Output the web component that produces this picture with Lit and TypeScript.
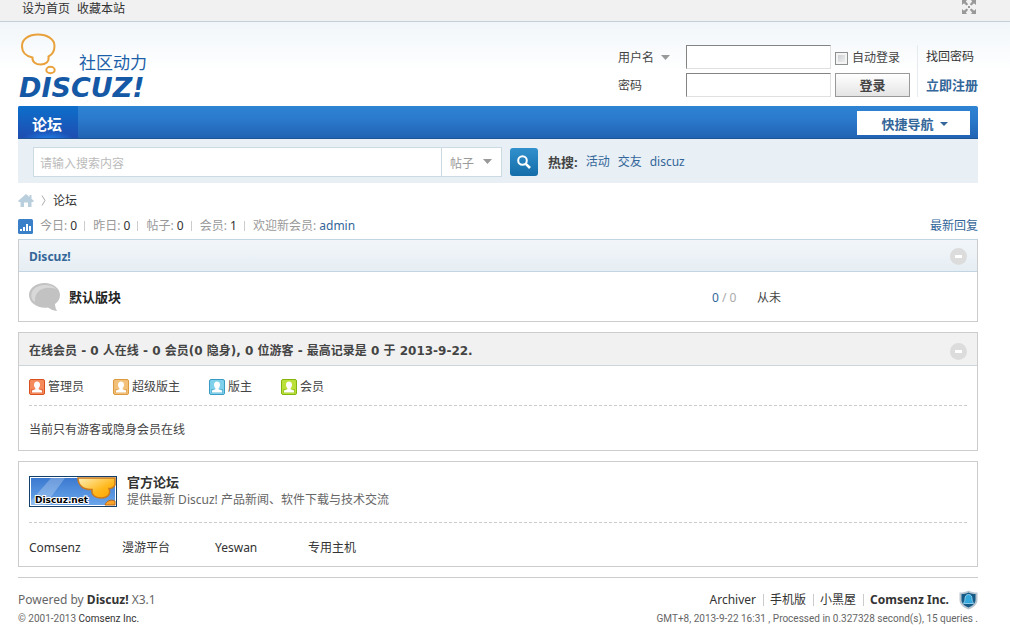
import { LitElement, html, css, svg } from "lit";
import { customElement, state } from "lit/decorators.js";

const ROLES = [
  { name: "管理员", light: "#f58a5c", dark: "#d9501f" },
  { name: "超级版主", light: "#f3c07a", dark: "#dc9a40" },
  { name: "版主", light: "#7fd0ea", dark: "#3a9cc4" },
  { name: "会员", light: "#bce03a", dark: "#84b40e" },
];

const STATS = [
  { label: "今日", value: 0 },
  { label: "昨日", value: 0 },
  { label: "帖子", value: 0 },
  { label: "会员", value: 1 },
];

@customElement("app-root")
export class AppRoot extends LitElement {
  static styles = css`
    :host {
      display: block;
      min-height: 100vh;
      background: #fff;
      color: #444;
      font: 12px/18px "Noto Sans", "Noto Sans CJK SC", sans-serif;
    }
    * { box-sizing: border-box; }
    a { color: #333; text-decoration: none; }
    a:hover { text-decoration: underline; }
    button, input, select { font: inherit; color: inherit; margin: 0; padding: 0; }
    svg { display: block; flex: none; }
    .link { color: #369; }
    .strong { font-weight: 700; }
    .wrap { padding: 0 32px 0 18px; }
    .top {
      display: flex;
      justify-content: space-between;
      height: 22px;
      background: #f1f1f1;
      border-bottom: 1px solid #c4ced6;
    }
    .toplinks { display: flex; gap: 7px; padding-left: 4px; line-height: 18px; }
    .icon-button { display: block; border: 0; background: none; cursor: pointer; }
    .top .icon-button { align-self: flex-start; }

    .header {
      display: flex;
      justify-content: space-between;
      height: 84px;
      background: linear-gradient(#f1f6fa, #fff 50px);
    }
    .logo { margin-top: 9px; }
    .login {
      display: flex;
      margin-top: 23px;
      height: 52px;
    }
    .fields {
      display: grid;
      grid-template-columns: 64px 145px 75px;
      grid-template-rows: 24px 24px;
      gap: 4px;
      align-items: center;
    }
    .fields label { padding-top: 2px; }
    .pick { display: flex; align-items: center; }
    .pick select {
      appearance: none;
      border: 0;
      background: none;
      width: 43px;
      height: 24px;
      padding-top: 2px;
    }
    .box {
      width: 100%;
      height: 24px;
      background: #fff;
      border: 1px solid;
      border-color: #848484 #e0e0e0 #e0e0e0 #848484;
      padding: 0 4px;
    }
    .auto { display: flex; align-items: center; gap: 4px; white-space: nowrap; }
    .auto input {
      appearance: none;
      width: 13px;
      height: 13px;
      border: 1px solid #8e8f8f;
      background: linear-gradient(135deg, #c4c8cc, #f6f6f6);
      box-shadow: inset 0 0 0 2px #f4f4f4;
    }
    .auto input:checked { background: #369; }
    .submit {
      height: 24px;
      border: 1px solid #999;
      background: linear-gradient(#fff, #e4e4e4);
      font-size: 13px;
      font-weight: 700;
      cursor: pointer;
    }
    .extra {
      display: grid;
      grid-template-rows: 24px 24px;
      gap: 4px;
      align-items: center;
      margin-left: 7px;
      padding-left: 8px;
      border-left: 1px solid #e6ebef;
    }
    .extra .strong { font-size: 13px; }

    .nav {
      display: flex;
      justify-content: space-between;
      align-items: flex-start;
      height: 33px;
      border-radius: 2px 2px 0 0;
      border-bottom: 1px solid #1f5496;
      background: linear-gradient(#2f83d3, #2b7acd 40%, #2263b3);
      overflow: hidden;
    }
    .tab {
      width: 60px;
      height: 33px;
      padding-left: 14px;
      background:
        radial-gradient(ellipse 26px 8px at 50% 100%, #1f80e8, transparent),
        linear-gradient(#0d6fcb, #1f4cb0);
      color: #fff;
      font-size: 15px;
      font-weight: 700;
      line-height: 36px;
    }
    .quick {
      display: flex;
      justify-content: center;
      align-items: center;
      gap: 6px;
      width: 113px;
      height: 24px;
      margin: 5px 8px 0 0;
      padding: 2px 0 0 2px;
      border: 0;
      background: #fff;
      color: #369;
      font-size: 13px;
      font-weight: 700;
      cursor: pointer;
    }
    .search {
      display: flex;
      align-items: center;
      height: 44px;
      padding: 1px 15px 0;
      background: #e8eff5;
    }
    .query {
      flex: 0 1 409px;
      height: 30px;
      padding: 4px 6px 0;
      border: 1px solid #ccdae3;
      background: #fff;
    }
    .query::placeholder { color: #bbb; opacity: 1; }
    .kind {
      display: flex;
      align-items: center;
      height: 30px;
      width: 60px;
      padding-left: 8px;
      border: 1px solid #ccdae3;
      border-left: 0;
      background: #fff;
      color: #999;
    }
    .kind select { appearance: none; border: 0; background: none; width: 33px; height: 28px; padding-top: 4px; }
    .go {
      display: grid;
      place-items: center;
      width: 28px;
      height: 28px;
      margin: 0 10px 0 8px;
      border: 0;
      border-radius: 3px;
      background: linear-gradient(#3191cd, #146ca8);
      cursor: pointer;
    }
    .hot { display: flex; gap: 8px; }
    .hot .strong { font-size: 13px; }

    .crumbs { display: flex; align-items: center; gap: 7px; height: 35px; }
    .statbar { display: flex; justify-content: space-between; height: 16px; margin-bottom: 5px; line-height: 16px; color: #999; }
    .statrow { display: flex; align-items: center; }
    .statrow svg { margin-right: 7px; }
    .stat { padding-right: 8px; margin-right: 8px; background: linear-gradient(#ccc, #ccc) right center / 1px 10px no-repeat; }
    .stat b { font-weight: 400; color: #333; }

    .panel { border: 1px solid #ccc; margin-bottom: 10px; }
    .head {
      display: flex;
      align-items: center;
      justify-content: space-between;
      height: 33px;
      padding: 2px 10px 0;
      border-bottom: 1px solid #c2d5e3;
    }
    .head h2 { margin: 0; font-size: 12px; line-height: 18px; font-weight: 700; }
    .forum { border-color: #c2d5e3 #ccc #ccc; }
    .forum .head { height: 32px; background: linear-gradient(#f2f6fa, #e6eef3); }
    .online .head { padding-top: 4px; background: #f1f1f1; border-color: #ccd5da; }
    .online h2 { font-family: "DejaVu Sans", "Noto Sans CJK SC", sans-serif; }
    table { width: 100%; border-collapse: collapse; table-layout: fixed; }
    td { padding: 2px 0 0; height: 49px; text-align: left; }
    .c-icon { width: 50px; padding: 0 0 0 10px; }
    .c-count { width: 45px; color: #aaa; }
    .c-last { width: 220px; }
    td .strong { font-size: 13px; color: #222; }
    .roles {
      display: flex;
      gap: 29px;
      margin: 0 10px;
      height: 40px;
      padding-top: 2px;
      align-items: center;
      border-bottom: 1px dashed #ccc;
    }
    .role { display: flex; align-items: center; gap: 3px; }
    .note { margin: 0; padding: 15px 10px 11px; }
    .partner {
      display: flex;
      gap: 10px;
      margin: 0 10px;
      padding: 11px 0 13px;
      border-bottom: 1px dashed #ccc;
      color: #666;
    }
    .partner svg { margin-top: 3px; }
    .partner .strong { display: block; font-size: 13px; color: #333; }
    .friends { display: grid; grid-template-columns: repeat(4, 93px); padding: 16px 10px 9px; }

    .footer {
      display: flex;
      justify-content: space-between;
      border-top: 1px solid #ccc;
      padding-top: 12px;
      color: #666;
    }
    .footer p { margin: 0; }
    .powered { line-height: 20px; }
    .small { font: 10px/18px Roboto, sans-serif; }
    .right { text-align: right; }
    .bottomlinks { display: flex; align-items: center; justify-content: flex-end; height: 20px; }
    .bottomlinks a + a { margin-left: 7px; padding-left: 7px; background: linear-gradient(#ccc, #ccc) left center / 1px 12px no-repeat; }
    .bottomlinks svg { margin-left: 10px; }
  `;

  @state() private forumOpen = true;
  @state() private onlineOpen = true;

  private arrow(color: string) {
    return html`<svg width="9" height="5" viewBox="0 0 9 5" aria-hidden="true"><path d="M0 0h9L4.500 5z" fill=${color} /></svg>`;
  }

  private toggle(open: boolean, flip: () => void) {
    return html`<button class="icon-button" aria-label="收起/展开" aria-expanded=${open} @click=${flip}>
      <svg width="17" height="17" viewBox="0 0 17 17">
        <circle cx="8.500" cy="8.500" r="8.500" fill="#dcdcdc" />
        <path d=${open ? "M5 7h7v3H5z" : "M5 7h2V5h3v2h2v3h-2v2H7v-2H5z"} fill="#fff" />
      </svg>
    </button>`;
  }

  private logo() {
    return html`<svg class="logo" width="140" height="75" viewBox="0 0 140 75" role="img" aria-label="Discuz! 社区动力">
      <g fill="none" stroke="#e9a23b" stroke-width="2">
        <path d="M14.500 26.500C8 25.500 4 21 4 15C4 8 11 3.500 20 3.500S36.500 8 36.500 15C36.500 20.500 33.500 24 30.500 25.500C31.500 31 27.500 33.500 22.500 33.500C18 33.500 14 31 14.500 26.500Z" />
        <ellipse cx="32.500" cy="39" rx="4.200" ry="3.200" />
      </g>
      <text x="61" y="38" font-family="Noto Sans CJK SC, sans-serif" font-size="17" fill="#1c5fa8">社区动力</text>
      <text x="1" y="66" font-family="DejaVu Sans, sans-serif" font-size="27" font-weight="700" font-style="italic" fill="#1559a6">DISCUZ!</text>
    </svg>`;
  }

  private person(light: string, dark: string) {
    return html`<svg width="16" height="16" viewBox="0 0 16 16" aria-hidden="true">
      <rect x=".5" y=".5" width="15" height="15" rx="1.500" fill=${light} stroke=${dark} />
      <path d="M2 10h12v4H2z" fill=${dark} opacity=".5" />
      <path d="M8 2.500C10 2.500 11 4 11 5.800C11 7.500 10.300 8.500 9.600 9.200V10.300L13 11.600V13.500H3V11.600L6.400 10.300V9.200C5.700 8.500 5 7.500 5 5.800C5 4 6 2.500 8 2.500Z" fill="#fff" />
    </svg>`;
  }

  private banner() {
    return html`<svg width="88" height="31" viewBox="0 0 88 31" role="img" aria-label="Discuz.net">
      <defs>
        <linearGradient id="sky" x2="0" y2="1"><stop stop-color="#3b79d0" /><stop offset="1" stop-color="#6aa6ea" /></linearGradient>
        <linearGradient id="sun" x2="1" y2="1"><stop stop-color="#fff0b8" /><stop offset=".6" stop-color="#ffb81c" /><stop offset="1" stop-color="#ffa200" /></linearGradient>
      </defs>
      <rect width="88" height="31" fill="#12406b" />
      <rect x="1" y="1" width="86" height="29" fill="#fff" />
      <rect x="2" y="2" width="84" height="27" fill="url(#sky)" />
      <path d="M22 2h14L16 29H2v-4z" fill="#fff" opacity=".25" />
      <path d="M49 2C49 9 54 14 63 13.500C62 19 66 22 72 22C79 22 82 18 80 12.500C83 12.500 85 11 86 9V2Z" fill="url(#sun)" stroke="#c97a20" stroke-width="1.500" />
      <path d="M76 29C77 25 82 23 86 25V29Z" fill="#f7a32a" stroke="#b8691a" />
      <text x="6" y="27" font-family="DejaVu Sans, sans-serif" font-size="9" font-weight="700" fill="#000" stroke="#fff" stroke-width="2" paint-order="stroke">Discuz.net</text>
    </svg>`;
  }

  render() {
    return html`
      <div class="top wrap">
        <div class="toplinks"><a href="#">设为首页</a><a href="#">收藏本站</a></div>
        <button class="icon-button" aria-label="切换到窄版">
          <svg width="17" height="15" viewBox="0 0 17 15">
            <path d="M1 0h5L4.800 1.500 7.200 4.200 5.500 5.500 3 3.200 1 5zM15 0h-5l1.200 1.500-2.400 2.700 1.700 1.300L13 3.200 15 5zM1 14h5l-1.200-1.500 2.400-2.700-1.700-1.300L3 10.800 1 9zM15 14h-5l1.200-1.500-2.400-2.700 1.700-1.300 2.500 2.300L15 9zM7 6h2v2H7z" fill="#999" />
          </svg>
        </button>
      </div>

      <header class="header wrap">
        <a href="#">${this.logo()}</a>
        <form class="login" @submit=${(e: Event) => e.preventDefault()}>
          <div class="fields">
            <div class="pick">
              <select aria-label="登录方式"><option>用户名</option><option>Email</option></select>
              ${this.arrow("#999")}
            </div>
            <input class="box" type="text" aria-label="用户名" />
            <label class="auto"><input type="checkbox" />自动登录</label>
            <label for="pw">密码</label>
            <input class="box" id="pw" type="password" />
            <button class="submit">登录</button>
          </div>
          <div class="extra"><a href="#">找回密码</a><a class="link strong" href="#">立即注册</a></div>
        </form>
      </header>

      <main class="wrap">
        <nav class="nav">
          <a class="tab" href="#">论坛</a>
          <button class="quick">快捷导航 ${svg`<svg width="8" height="4" viewBox="0 0 8 4"><path d="M0 0h8L4 4z" fill="#369" /></svg>`}</button>
        </nav>
        <form class="search" @submit=${(e: Event) => e.preventDefault()}>
          <input class="query" type="text" aria-label="搜索" placeholder="请输入搜索内容" />
          <div class="kind">
            <select aria-label="搜索类型"><option>帖子</option><option>用户</option></select>
            ${this.arrow("#999")}
          </div>
          <button class="go" aria-label="搜索">
            <svg width="14" height="14" viewBox="0 0 14 14" fill="none" stroke="#fff">
              <circle cx="5.500" cy="5.500" r="4.300" stroke-width="2" /><path d="M8.800 8.800L13 13" stroke-width="2.600" />
            </svg>
          </button>
          <div class="hot">
            <span class="strong">热搜:</span>
            <a class="link" href="#">活动</a><a class="link" href="#">交友</a><a class="link" href="#">discuz</a>
          </div>
        </form>

        <div class="crumbs">
          <a href="#" aria-label="首页"><svg width="16" height="13" viewBox="0 0 16 13"><path d="M8 0L0 7l1 1h1.500v5H6V8.500h4V13h3.500V8H15l1-1-2.500-2.200V1h-2v2z" fill="#b9cfdd" /></svg></a>
          <svg width="5" height="11" viewBox="0 0 5 11"><path d="M1 .5l3 5-3 5" fill="none" stroke="#aaa" /></svg>
          <a href="#">论坛</a>
        </div>

        <div class="statbar">
          <div class="statrow">
            <svg width="15" height="15" viewBox="0 0 15 15"><rect width="15" height="15" rx="1.500" fill="#3a80c8" /><path d="M2 10h2v2H2zM5 8h2v4H5zM8 5h2v7H8zM11 7h2v5h-2z" fill="#fff" /></svg>
            ${STATS.map((s) => html`<span class="stat">${s.label}: <b>${s.value}</b></span>`)}
            <span>欢迎新会员: <a class="link" href="#">admin</a></span>
          </div>
          <a class="link" href="#">最新回复</a>
        </div>

        <section class="panel forum">
          <div class="head">
            <h2><a class="link" href="#">Discuz!</a></h2>
            ${this.toggle(this.forumOpen, () => (this.forumOpen = !this.forumOpen))}
          </div>
          <table ?hidden=${!this.forumOpen}>
            <tr>
              <td class="c-icon">
                <svg width="32" height="30" viewBox="0 0 32 30">
                  <path d="M15.500 1C24 1 31 6 31 13C31 17 29 20 26 22C26 25 27 27 28 29C24 28.500 21 27 19 25.500C9 27 0 21 0 13C0 6 7 1 15.500 1Z" fill="#c2c2c2" />
                  <path d="M3 17C0 8 8 3 16 3C21 3 25 4.500 27 7C16 3 5 8 6 20Q4 19 3 17Z" fill="#d8d8d8" />
                </svg>
              </td>
              <td><a class="strong" href="#">默认版块</a></td>
              <td class="c-count"><span class="link">0</span> / 0</td>
              <td class="c-last">从未</td>
            </tr>
          </table>
        </section>

        <section class="panel online">
          <div class="head">
            <h2>在线会员 - 0 人在线 - 0 会员(0 隐身), 0 位游客 - 最高记录是 0 于 2013-9-22.</h2>
            ${this.toggle(this.onlineOpen, () => (this.onlineOpen = !this.onlineOpen))}
          </div>
          <div ?hidden=${!this.onlineOpen}>
            <div class="roles">
              ${ROLES.map((r) => html`<span class="role">${this.person(r.light, r.dark)}${r.name}</span>`)}
            </div>
            <p class="note">当前只有游客或隐身会员在线</p>
          </div>
        </section>

        <section class="panel">
          <div class="partner">
            <a href="#">${this.banner()}</a>
            <div><a class="strong" href="#">官方论坛</a>提供最新 Discuz! 产品新闻、软件下载与技术交流</div>
          </div>
          <div class="friends"><a href="#">Comsenz</a><a href="#">漫游平台</a><a href="#">Yeswan</a><a href="#">专用主机</a></div>
        </section>

        <footer class="footer">
          <div>
            <p class="powered">Powered by <a class="strong" href="#">Discuz!</a> X3.1</p>
            <p class="small">© 2001-2013 <a href="#">Comsenz Inc.</a></p>
          </div>
          <div class="right">
            <div class="bottomlinks">
              <a href="#">Archiver</a><a href="#">手机版</a><a href="#">小黑屋</a><a class="strong" href="#">Comsenz Inc.</a>
              <svg width="19" height="20" viewBox="0 0 19 20">
                <path d="M9.500 .5C12 2 15 2.500 18.500 2.500V10C18.500 14 15 17.500 9.500 19.500C4 17.500 .5 14 .5 10V2.500C4 2.500 7 2 9.500 .5Z" fill="#b9c6cf" />
                <path d="M9.500 2.500C12 3.500 14 4 16.500 4V10C16.500 13 14 16 9.500 17.500C5 16 2.500 13 2.500 10V4C5 4 7 3.500 9.500 2.500Z" fill="#155a86" />
                <path d="M9.500 4.500C12 4.500 13 6.500 13 9C13 11 14 12 14.500 13.500H4.500C5 12 6 11 6 9C6 6.500 7 4.500 9.500 4.500Z" fill="#35a9dc" stroke="#a5dcf5" stroke-width=".8" />
              </svg>
            </div>
            <p class="small">GMT+8, 2013-9-22 16:31 , Processed in 0.327328 second(s), 15 queries .</p>
          </div>
        </footer>
      </main>
    `;
  }
}
